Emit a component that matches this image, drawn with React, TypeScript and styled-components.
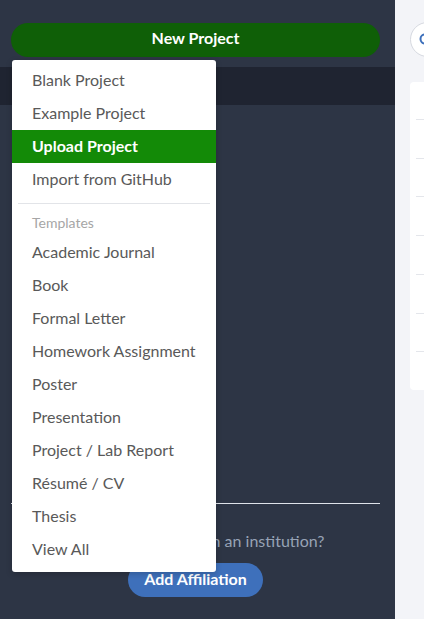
import React from "react";
import styled, { createGlobalStyle } from "styled-components";

const Global = createGlobalStyle`
  html, body { margin: 0; padding: 0; }
  body {
    font-family: Lato, "Open Sans", "Liberation Sans", sans-serif;
    background: #f3f4f8;
    overflow: hidden;
  }
  * { box-sizing: border-box; }
`;

const Page = styled.div`
  display: flex;
  width: 424px;
  height: 619px;
  overflow: hidden;
  position: relative;
`;

const Sidebar = styled.aside`
  width: 395px;
  flex: 0 0 395px;
  background: #2d3545;
  display: flex;
  flex-direction: column;
  padding: 23px 0 22px;
`;

const PillButton = styled.button<{ $tone: "green" | "blue" }>`
  border: none;
  border-radius: 999px;
  height: 34px;
  font-family: Lato, "Liberation Sans", sans-serif;
  font-weight: 700;
  font-size: 16px;
  line-height: 20px;
  color: #ffffff;
  background: ${(p) => (p.$tone === "green" ? "#0f5f07" : "#3e70bb")};
  padding: 0 16px 3px;
  cursor: pointer;
`;

const NewButton = styled(PillButton)`
  margin: 0 15px 0 11px;
  padding-bottom: 5px;
`;

const NavList = styled.ul`
  list-style: none;
  margin: 10px 0 0;
  padding: 0;
  display: flex;
  flex-direction: column;
`;

const NavItem = styled.li<{ $active?: boolean }>`
  height: ${(p) => (p.$active ? "38px" : "33px")};
  background: ${(p) => (p.$active ? "#1f2431" : "transparent")};
`;

const Spacer = styled.div`
  flex: 1;
`;

const Affiliation = styled.div`
  margin: 0 15px 0 11px;
  border-top: 1px solid #dfe3ea;
  display: flex;
  flex-direction: column;
  align-items: center;
  padding-top: 26px;
  gap: 11px;
`;

const AffText = styled.p`
  margin: 0;
  font-size: 16px;
  line-height: 22px;
  color: #97a3b5;
`;

const Main = styled.main`
  flex: 1;
  overflow: hidden;
  padding: 22px 0 0 15px;
  display: flex;
  flex-direction: column;
  gap: 25px;
`;

const Search = styled.div`
  width: 300px;
  height: 35px;
  border: 1px solid #d6d9e0;
  border-radius: 999px;
  background: #ffffff;
  display: flex;
  align-items: center;
  padding-left: 8px;
`;

const Card = styled.div`
  width: 600px;
  height: 308px;
  background: #ffffff;
  border-radius: 4px;
  padding: 37px 0 0 6px;
  display: flex;
  flex-direction: column;
`;

const Row = styled.div`
  height: 39px;
  border-top: 1px solid #e4e6eb;
`;

const Menu = styled.ul`
  position: absolute;
  left: 12px;
  top: 60px;
  width: 204px;
  margin: 0;
  padding: 4px 0 6px;
  list-style: none;
  background: #ffffff;
  border-radius: 3px;
  box-shadow: 0 2px 6px rgba(0, 0, 0, 0.2);
  z-index: 10;
`;

const MenuItem = styled.li<{ $active?: boolean }>`
  height: 33px;
  display: flex;
  align-items: center;
  padding: 0 0 2px 20px;
  font-size: 16px;
  line-height: 20px;
  white-space: nowrap;
  color: ${(p) => (p.$active ? "#ffffff" : "#595959")};
  background: ${(p) => (p.$active ? "#138a07" : "transparent")};
  font-weight: ${(p) => (p.$active ? 700 : 400)};
`;

const Divider = styled.li`
  height: 1px;
  margin: 7px 6px 0;
  background: #e2e4e8;
`;

const MenuHeader = styled.li`
  height: 32px;
  display: flex;
  align-items: center;
  padding: 5px 0 0 20px;
  font-size: 14px;
  line-height: 18px;
  color: #a6a6a6;
`;

const topItems = ["Blank Project", "Example Project", "Upload Project", "Import from GitHub"];
const templates = [
  "Academic Journal",
  "Book",
  "Formal Letter",
  "Homework Assignment",
  "Poster",
  "Presentation",
  "Project / Lab Report",
  "Résumé / CV",
  "Thesis",
  "View All",
];

export default function App() {
  return (
    <Page>
      <Global />
      <Sidebar>
        <NewButton $tone="green">New Project</NewButton>
        <NavList>
          <NavItem $active />
          <NavItem />
          <NavItem />
          <NavItem />
          <NavItem />
        </NavList>
        <Spacer />
        <Affiliation>
          <AffText>Are you affiliated with an institution?</AffText>
          <PillButton $tone="blue">Add Affiliation</PillButton>
        </Affiliation>
      </Sidebar>
      <Main>
        <Search>
          <svg width="14" height="14" viewBox="0 0 14 14">
            <circle cx="6" cy="6" r="4.5" fill="none" stroke="#3e70bb" strokeWidth="2" />
            <line x1="9.5" y1="9.5" x2="13" y2="13" stroke="#3e70bb" strokeWidth="2" />
          </svg>
        </Search>
        <Card>
          {Array.from({ length: 7 }).map((_, i) => (
            <Row key={i} />
          ))}
        </Card>
      </Main>
      <Menu>
        {topItems.map((t) => (
          <MenuItem key={t} $active={t === "Upload Project"}>
            {t}
          </MenuItem>
        ))}
        <Divider />
        <MenuHeader>Templates</MenuHeader>
        {templates.map((t) => (
          <MenuItem key={t}>{t}</MenuItem>
        ))}
      </Menu>
    </Page>
  );
}
